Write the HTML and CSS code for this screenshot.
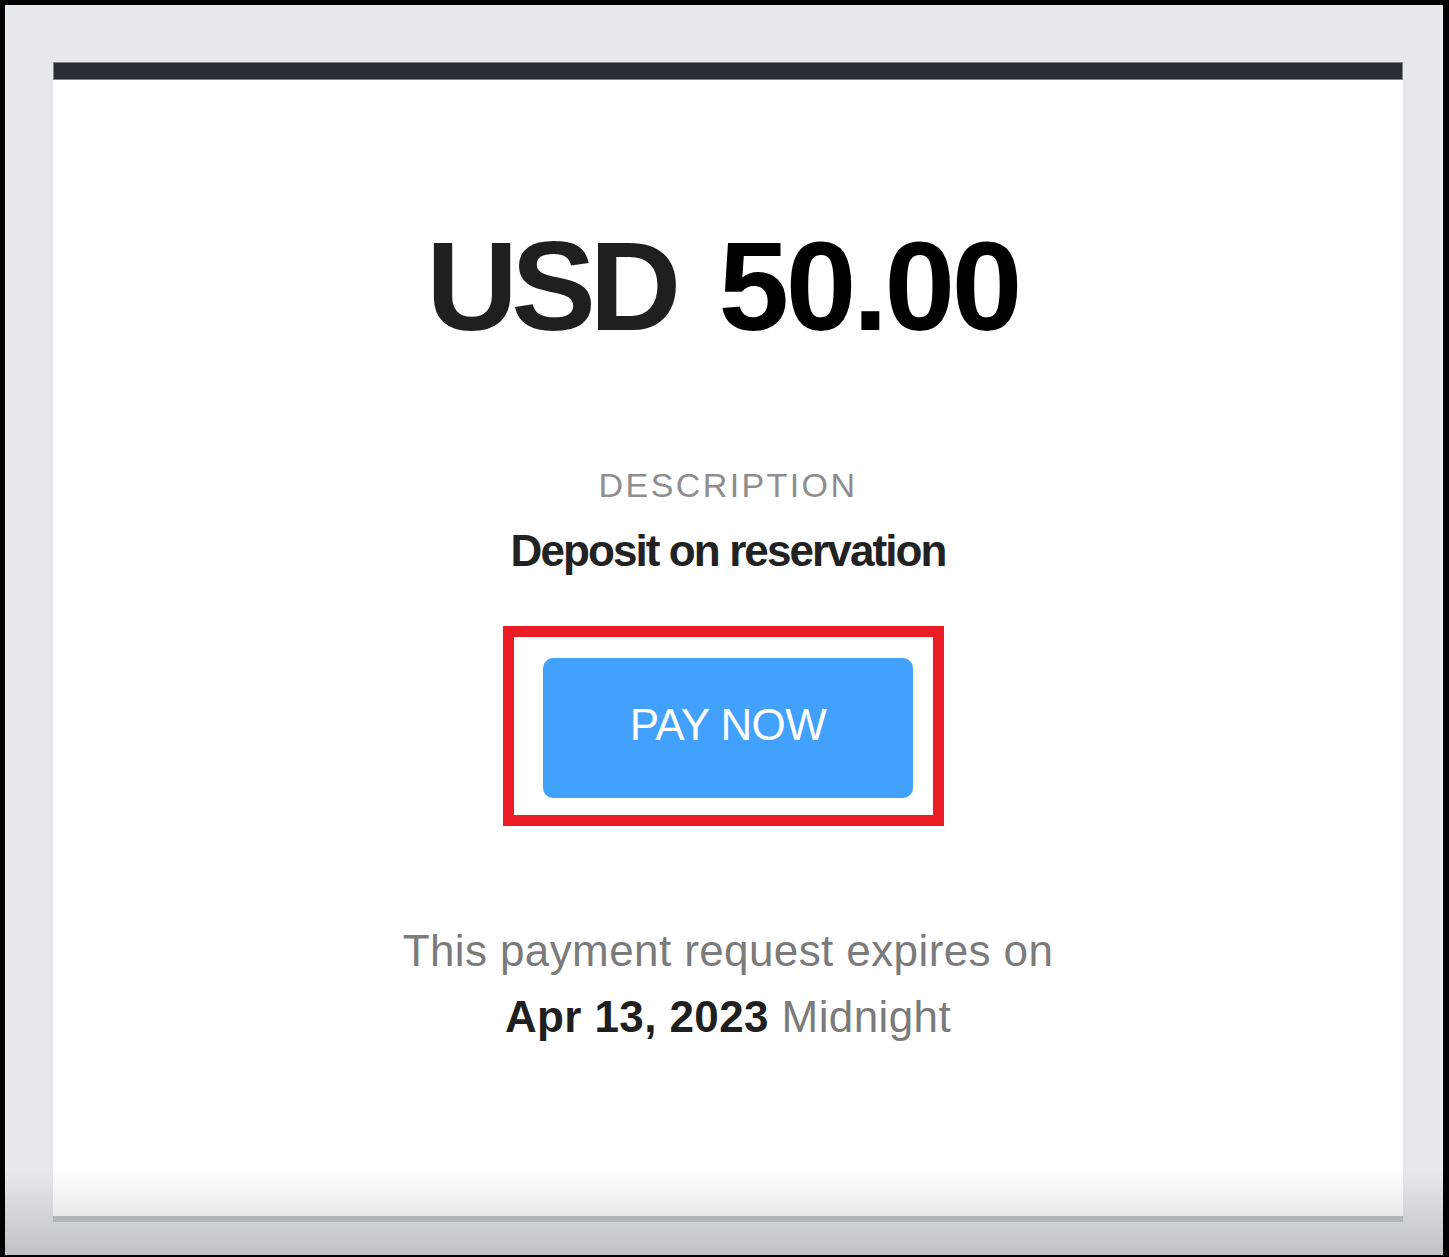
FILE: index.html
```html
<!DOCTYPE html>
<html lang="en">
<head>
<meta charset="utf-8">
<title>Payment request</title>
<link rel="stylesheet" href="styles.css">
</head>
<body>
<div class="frame">
  <div class="card">
    <div class="card-bar"></div>
    <div class="card-body">
      <h1 class="amount"><span class="currency">USD</span> <span class="value">50.00</span></h1>
      <div class="label">DESCRIPTION</div>
      <div class="desc">Deposit on reservation</div>
      <div class="highlight"><a class="pay-btn" href="#">PAY NOW</a></div>
      <p class="expiry">This payment request expires on<br><strong>Apr 13, 2023</strong> Midnight</p>
    </div>
  </div>
  <div class="fade"></div>
</div>
</body>
</html>
```

FILE: styles.css
```css
html, body {
  margin: 0;
  padding: 0;
}

body {
  font-family: "Liberation Sans", Arial, sans-serif;
  background: #000;
}

.frame {
  position: relative;
  box-sizing: border-box;
  width: 1449px;
  height: 1257px;
  overflow: hidden;
  border-style: solid;
  border-color: #000;
  border-width: 5px 6px 2px 5px;
  background: #e6eaed;
  padding-top: 57px;
}

.card {
  width: 1350px;
  margin-left: 48px;
}

.card-bar {
  box-sizing: border-box;
  height: 18px;
  background: #2a2f36;
  border: 1px solid #80858b;
}

.card-body {
  box-sizing: border-box;
  height: 1142px;
  background: #fff;
  border-bottom: 6px solid #c3c9cd;
  padding-top: 143px;
  text-align: center;
}

.amount {
  margin: 0;
  padding-right: 11px;
  font-size: 127px;
  line-height: 127px;
  font-weight: 700;
  letter-spacing: -3.5px;
  word-spacing: 12px;
  color: #1f1f1f;
}

.amount .currency {
  letter-spacing: -6.5px;
}

.amount .value {
  color: #000;
}

.label {
  margin-top: 115px;
  font-size: 34px;
  line-height: 40.8px;
  letter-spacing: 2.4px;
  color: #8e8e8e;
}

.desc {
  margin-top: 19px;
  font-size: 44px;
  line-height: 52.8px;
  font-weight: 700;
  letter-spacing: -1.9px;
  color: #222;
}

.highlight {
  display: inline-block;
  margin-top: 48px;
  margin-right: 9px;
  border: 11px solid #ec1c24;
  padding: 21px 20px 17px 29px;
}

.pay-btn {
  display: flex;
  align-items: center;
  justify-content: center;
  box-sizing: border-box;
  width: 370px;
  height: 140px;
  padding-bottom: 5px;
  border-radius: 10px;
  background: #42a1fd;
  color: #fff;
  font-size: 44px;
  line-height: 44px;
  letter-spacing: -0.6px;
  text-decoration: none;
}

.expiry {
  margin: 92px 0 0;
  font-size: 44px;
  line-height: 66px;
  letter-spacing: 0.4px;
  color: #7b7b7b;
}

.expiry strong {
  color: #1f1f1f;
  font-weight: 700;
}

.fade {
  position: absolute;
  left: 0;
  right: 0;
  bottom: 0;
  height: 85px;
  background: linear-gradient(to bottom, rgba(0, 0, 0, 0), rgba(0, 0, 0, 0.17));
  pointer-events: none;
}
```
